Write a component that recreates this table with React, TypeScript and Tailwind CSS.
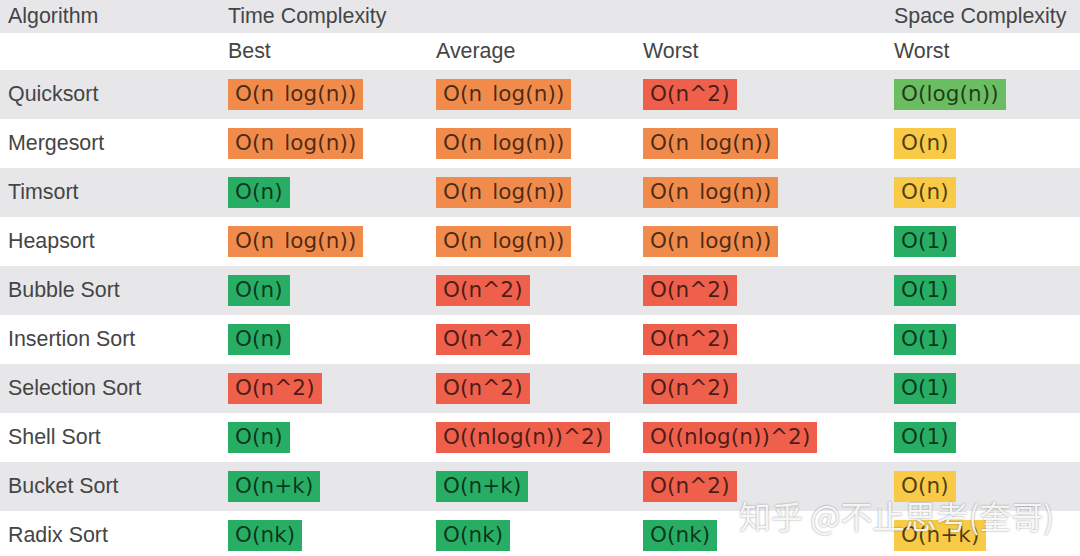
import React from "react";

type Tone = "orange" | "red" | "green" | "lime" | "yellow";

const toneClass: Record<Tone, string> = {
  orange: "bg-[#f18b4b]",
  red: "bg-[#ee5f4c]",
  green: "bg-[#28ae64]",
  lime: "bg-[#6bbd62]",
  yellow: "bg-[#f8ca47]",
};

type Cell = [string, Tone];

const rows: { name: string; cells: Cell[] }[] = [
  { name: "Quicksort", cells: [["O(n log(n))", "orange"], ["O(n log(n))", "orange"], ["O(n^2)", "red"], ["O(log(n))", "lime"]] },
  { name: "Mergesort", cells: [["O(n log(n))", "orange"], ["O(n log(n))", "orange"], ["O(n log(n))", "orange"], ["O(n)", "yellow"]] },
  { name: "Timsort", cells: [["O(n)", "green"], ["O(n log(n))", "orange"], ["O(n log(n))", "orange"], ["O(n)", "yellow"]] },
  { name: "Heapsort", cells: [["O(n log(n))", "orange"], ["O(n log(n))", "orange"], ["O(n log(n))", "orange"], ["O(1)", "green"]] },
  { name: "Bubble Sort", cells: [["O(n)", "green"], ["O(n^2)", "red"], ["O(n^2)", "red"], ["O(1)", "green"]] },
  { name: "Insertion Sort", cells: [["O(n)", "green"], ["O(n^2)", "red"], ["O(n^2)", "red"], ["O(1)", "green"]] },
  { name: "Selection Sort", cells: [["O(n^2)", "red"], ["O(n^2)", "red"], ["O(n^2)", "red"], ["O(1)", "green"]] },
  { name: "Shell Sort", cells: [["O(n)", "green"], ["O((nlog(n))^2)", "red"], ["O((nlog(n))^2)", "red"], ["O(1)", "green"]] },
  { name: "Bucket Sort", cells: [["O(n+k)", "green"], ["O(n+k)", "green"], ["O(n^2)", "red"], ["O(n)", "yellow"]] },
  { name: "Radix Sort", cells: [["O(nk)", "green"], ["O(nk)", "green"], ["O(nk)", "green"], ["O(n+k)", "yellow"]] },
];

const cols = "grid grid-cols-[228px_208px_207px_251px_1fr] items-center";

const Badge = ({ text, tone }: { text: string; tone: Tone }) => (
  <span
    className={`inline-flex items-center h-[31px] px-[7px] text-[21.5px] text-black/70 font-['DejaVu_Sans',sans-serif] tracking-[0.1px] [word-spacing:3px] ${toneClass[tone]}`}
  >
    {text}
  </span>
);

const App = () => {
  return (
    <div className="relative w-[1080px] h-[556px] overflow-hidden bg-white text-[#454545] font-['Liberation_Sans',Arial,sans-serif] text-[21.4px]">
      <div className={`${cols} h-[33px] bg-[#e7e7e9]`}>
        <div className="pl-2">Algorithm</div>
        <div className="col-span-3">Time Complexity</div>
        <div>Space Complexity</div>
      </div>
      <div className={`${cols} h-[37px]`}>
        <div />
        <div>Best</div>
        <div>Average</div>
        <div>Worst</div>
        <div>Worst</div>
      </div>
      {rows.map((r, i) => (
        <div key={r.name} className={`${cols} h-[49px] ${i % 2 === 0 ? "bg-[#e7e7e9]" : "bg-white"}`}>
          <div className="pl-2">{r.name}</div>
          {r.cells.map(([t, tone], j) => (
            <div key={j}>
              <Badge text={t} tone={tone} />
            </div>
          ))}
        </div>
      ))}
      <div className="absolute left-[739px] top-[491px] text-[32px] text-white/90 font-['Noto_Sans_CJK_SC',sans-serif] [text-shadow:0_0_2px_rgba(0,0,0,0.45)] whitespace-nowrap">
        知乎 @不止思考(奎哥)
      </div>
    </div>
  );
};

export default App;
